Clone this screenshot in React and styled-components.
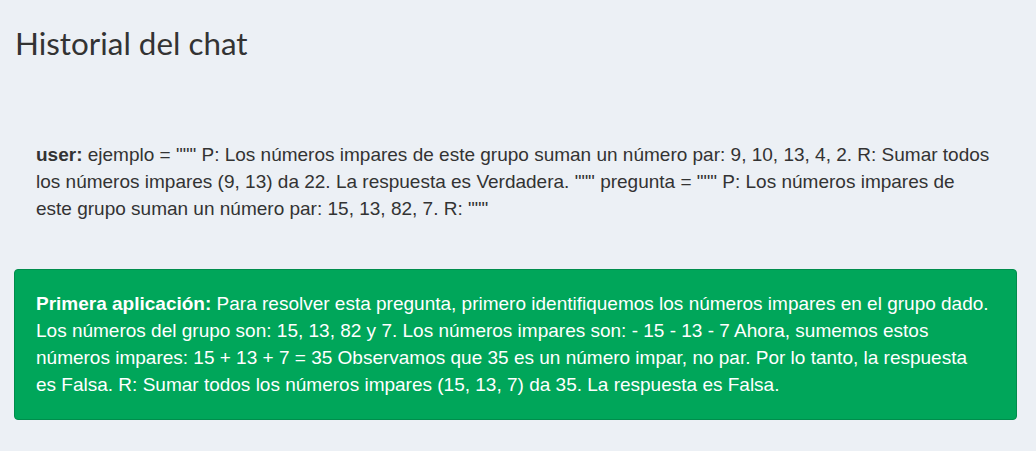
import React from "react";
import styled, { createGlobalStyle } from "styled-components";

const Global = createGlobalStyle`
  html, body {
    margin: 0;
    padding: 0;
    background: #ecf0f5;
  }
  body {
    font-family: "Liberation Sans", Arial, sans-serif;
  }
`;

const Page = styled.div`
  width: 1003px;
  padding: 0 0 0 14px;
  box-sizing: content-box;
`;

const Title = styled.h2`
  margin: 0;
  padding: 23px 0 0 1px;
  font-family: "Lato", "Noto Sans", sans-serif;
  font-weight: 400;
  font-size: 31.4px;
  line-height: 40px;
  color: #333;
`;

const ChatList = styled.div`
  margin-top: 57px;
`;

const Message = styled.div`
  border: 1px solid ${(p) => (p.$bot ? "#008d4c" : "transparent")};
  background: ${(p) => (p.$bot ? "#00a65a" : "transparent")};
  color: ${(p) => (p.$bot ? "#fff" : "#333")};
  border-radius: 4px;
  padding: 20px ${(p) => (p.$bot ? "27px" : "22px")} 21px 21px;
  margin-bottom: 25px;
  font-size: 19px;
  line-height: 27px;
`;

const Who = styled.b`
  font-weight: 700;
`;

const chat = [
  {
    who: "user",
    text: 'ejemplo = """ P: Los números impares de este grupo suman un número par: 9, 10, 13, 4, 2. R: Sumar todos los números impares (9, 13) da 22. La respuesta es Verdadera. """ pregunta = """ P: Los números impares de este grupo suman un número par: 15, 13, 82, 7. R: """',
  },
  {
    who: "Primera aplicación",
    bot: true,
    text: "Para resolver esta pregunta, primero identifiquemos los números impares en el grupo dado. Los números del grupo son: 15, 13, 82 y 7. Los números impares son: - 15 - 13 - 7 Ahora, sumemos estos números impares: 15 + 13 + 7 = 35 Observamos que 35 es un número impar, no par. Por lo tanto, la respuesta es Falsa. R: Sumar todos los números impares (15, 13, 7) da 35. La respuesta es Falsa.",
  },
];

export default function App() {
  return (
    <Page>
      <Global />
      <Title>Historial del chat</Title>
      <ChatList>
        {chat.map((m, i) => (
          <Message key={i} $bot={m.bot}>
            <Who>{m.who}:</Who> {m.text}
          </Message>
        ))}
      </ChatList>
    </Page>
  );
}
